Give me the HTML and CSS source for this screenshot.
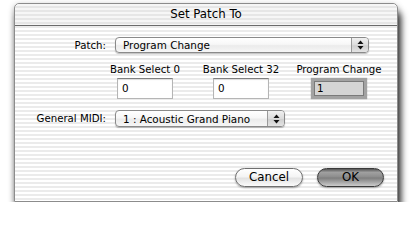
FILE: index.html
```html
<!DOCTYPE html>
<html>
<head>
<meta charset="utf-8">
<title>Set Patch To</title>
<link rel="stylesheet" href="styles.css">
</head>
<body>
<div class="window">
  <div class="titlebar">Set Patch To</div>
  <div class="content">
    <div class="row row-patch">
      <label class="row-label">Patch:</label>
      <div class="popup popup-patch">
        <span class="popup-text">Program Change</span>
        <span class="popup-arrows"><svg width="7" height="10" viewBox="0 0 7 10"><polygon points="3.5,0.5 6.5,4 0.5,4" fill="#111"/><polygon points="0.5,6 6.5,6 3.5,9.5" fill="#111"/></svg></span>
      </div>
    </div>
    <div class="fields">
      <div class="field-col col-a">
        <div class="field-label">Bank Select 0</div>
        <div class="textfield">0</div>
      </div>
      <div class="field-col col-b">
        <div class="field-label">Bank Select 32</div>
        <div class="textfield">0</div>
      </div>
      <div class="field-col col-c">
        <div class="field-label">Program Change</div>
        <div class="textfield textfield-focus">1</div>
      </div>
    </div>
    <div class="row row-midi">
      <label class="row-label">General MIDI:</label>
      <div class="popup popup-midi">
        <span class="popup-text">1 : Acoustic Grand Piano</span>
        <span class="popup-arrows"><svg width="7" height="10" viewBox="0 0 7 10"><polygon points="3.5,0.5 6.5,4 0.5,4" fill="#111"/><polygon points="0.5,6 6.5,6 3.5,9.5" fill="#111"/></svg></span>
      </div>
    </div>
    <div class="buttons">
      <button class="btn btn-cancel">Cancel</button>
      <button class="btn btn-ok">OK</button>
    </div>
  </div>
</div>
</body>
</html>
```
FILE: styles.css
```css
html, body {
  margin: 0;
  padding: 0;
  background: #ffffff;
}
body {
  font-family: "DejaVu Sans", "Liberation Sans", sans-serif;
  font-size: 10.2px;
  color: #000;
}
.window {
  margin: 3px 0 0 14px;
  width: 384px;
  height: 199px;
  box-sizing: border-box;
  border: 1px solid #8c8c8c;
  border-radius: 5px 5px 0 0;
  background: repeating-linear-gradient(to bottom, #ffffff 0px, #ffffff 2px, #ebebeb 2px, #ebebeb 4px);
  box-shadow: 3px 9px 7px rgba(0, 0, 0, 0.8), 0 2px 6px rgba(0, 0, 0, 0.3);
  display: flex;
  flex-direction: column;
}
.titlebar {
  height: 21px;
  line-height: 21px;
  border-bottom: 1px solid #6b6b6b;
  text-align: center;
  font-size: 11.8px;
  border-radius: 5px 5px 0 0;
  background: repeating-linear-gradient(to bottom, #f6f6f6 0px, #f6f6f6 2px, #e6e6e6 2px, #e6e6e6 4px);
}
.content {
  display: flex;
  flex-direction: column;
  flex: 1;
}
.row {
  display: flex;
  align-items: center;
  gap: 9px;
}
.row-label {
  width: 91px;
  text-align: right;
}
.row-patch {
  margin-top: 11px;
}
.popup {
  height: 16px;
  box-sizing: border-box;
  border: 1px solid #8a8a8a;
  border-radius: 4px;
  background: linear-gradient(to bottom, #ffffff 0%, #f7f7f7 45%, #ebebeb 55%, #f6f6f6 100%);
  box-shadow: 0 1px 1px rgba(0, 0, 0, 0.25);
  display: flex;
  align-items: center;
  overflow: hidden;
}
.popup-patch {
  width: 254px;
}
.popup-midi {
  width: 170px;
  height: 17px;
}
.popup-text {
  flex: 1;
  padding-left: 7px;
  font-size: 10.4px;
  white-space: nowrap;
}
.popup-arrows {
  width: 16px;
  align-self: stretch;
  border-left: 1px solid #9a9a9a;
  background: linear-gradient(to bottom, #f0f0f0 0%, #dcdcdc 50%, #cfcfcf 55%, #e4e4e4 100%);
  display: flex;
  align-items: center;
  justify-content: center;
}
.fields {
  display: flex;
  margin-top: 10px;
  margin-left: 82px;
}
.field-col {
  display: flex;
  flex-direction: column;
  align-items: center;
  gap: 2px;
}
.col-a, .col-b {
  width: 96px;
}
.col-c {
  width: 100px;
}
.field-label {
  height: 13px;
  line-height: 13px;
  white-space: nowrap;
}
.textfield {
  width: 56px;
  height: 21px;
  box-sizing: border-box;
  background: #fff;
  border: 1px solid #b5b5b5;
  border-top-color: #7f7f7f;
  box-shadow: inset 0 1px 1px rgba(0, 0, 0, 0.15);
  padding-left: 4px;
  line-height: 19px;
  font-size: 10.4px;
}
.textfield-focus {
  background: #d4d4d4;
  border: 3px solid #a2a2a2;
  box-shadow: inset 0 0 0 1px #7a7a7a, 0 0 1px rgba(0, 0, 0, 0.4);
  line-height: 15px;
  padding-left: 3px;
}
.row-midi {
  margin-top: 11px;
}
.buttons {
  display: flex;
  justify-content: flex-end;
  gap: 14px;
  margin-top: 41px;
  padding-right: 13px;
}
.btn {
  height: 19px;
  border-radius: 10px;
  font-family: "DejaVu Sans", "Liberation Sans", sans-serif;
  font-size: 11.8px;
  color: #000;
  padding: 0;
  line-height: 17px;
  box-shadow: 0 1px 2px rgba(0, 0, 0, 0.35);
}
.btn-cancel {
  width: 68px;
  border: 1px solid #6f6f6f;
  background: linear-gradient(to bottom, #ffffff 0%, #f4f4f4 45%, #e2e2e2 55%, #fbfbfb 100%);
}
.btn-ok {
  width: 67px;
  border: 1px solid #3a3a3a;
  background: linear-gradient(to bottom, #555555 0%, #a0a0a0 20%, #8c8c8c 48%, #7c7c7c 52%, #cccccc 100%);
}
```
